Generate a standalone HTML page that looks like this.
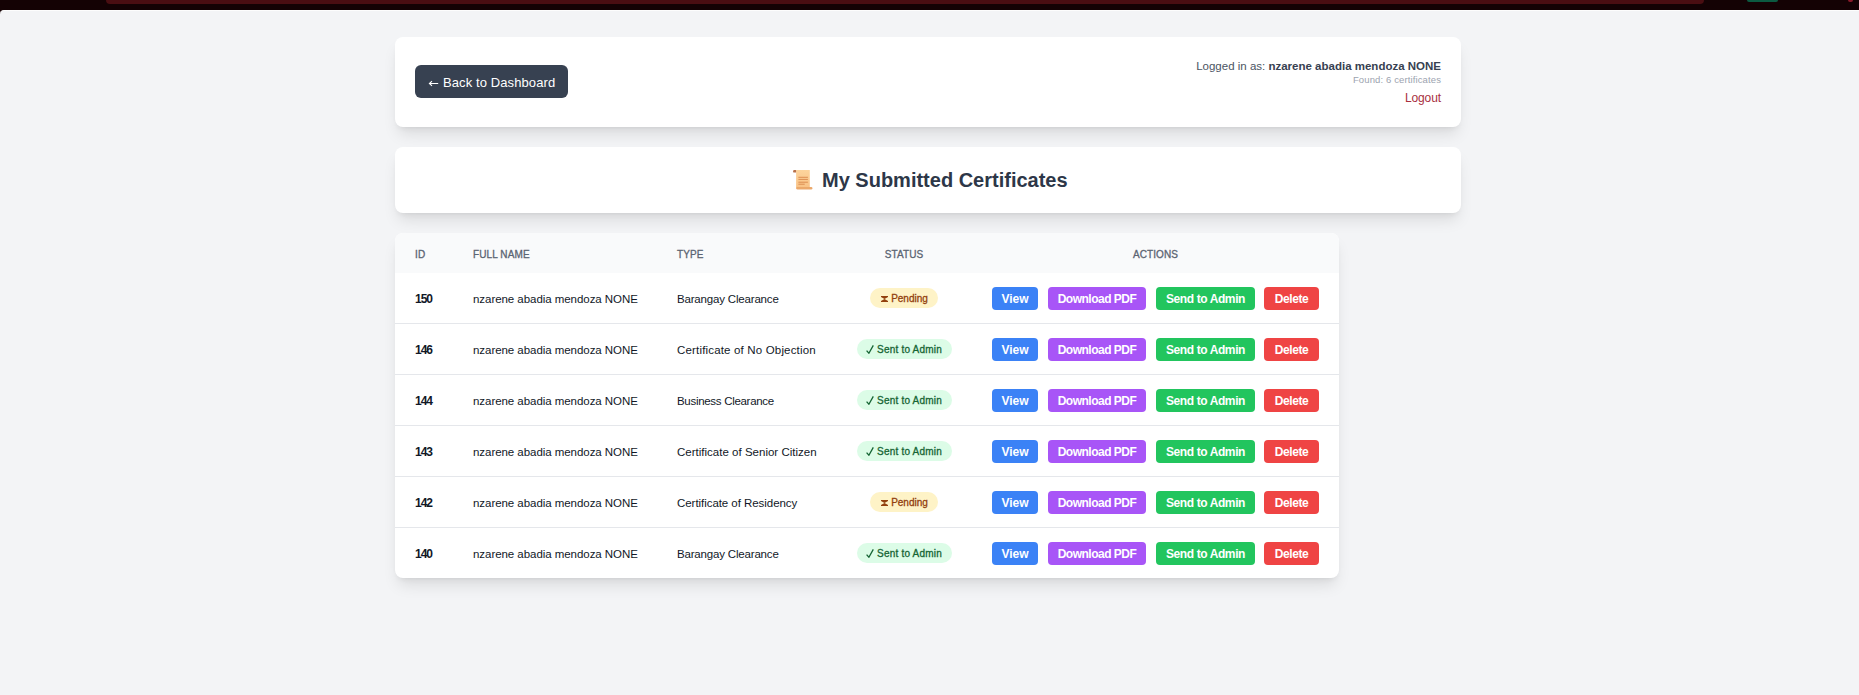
<!DOCTYPE html>
<html>
<head>
<meta charset="utf-8">
<style>
*{box-sizing:border-box;margin:0;padding:0}
html,body{width:1859px;height:695px;overflow:hidden}
body{background:#140204;font-family:"Liberation Sans",sans-serif;position:relative}
.topred{position:absolute;left:106px;top:0;width:1598px;height:4px;background:#4a0e12;border-radius:0 0 6px 6px}
.topgreen{position:absolute;left:1747px;top:0;width:31px;height:2px;background:#0b5a41;border-radius:0 0 3px 3px}
.topdot{position:absolute;left:1848px;top:0;width:5px;height:2px;background:#8a1a2a;border-radius:0 0 3px 3px}
.page{position:absolute;left:0;top:10px;width:1859px;height:685px;background:#f3f4f6;border-radius:4px 0 0 0;border-top:1px solid #fdfdfd}
.card{position:absolute;background:#fff;border-radius:8px;box-shadow:0 10px 15px -3px rgba(0,0,0,0.1),0 4px 6px -4px rgba(0,0,0,0.1)}
.hdr{left:395px;top:37px;width:1066px;height:90px}
.back{position:absolute;left:20px;top:28px;width:153px;height:33px;background:#374151;border-radius:6px;color:#fff;font-size:13px;letter-spacing:0.1px;line-height:33px;white-space:nowrap}
.back svg{position:absolute;left:13px;top:15px}
.back span{position:absolute;left:28px;top:1px}
.info{position:absolute;right:20px;top:21px;text-align:right;color:#4b5563;white-space:nowrap}
.l1{position:absolute;right:0;top:1px;font-size:11.5px;line-height:14px}
.l1 b{color:#374151}
.l2{position:absolute;right:0;top:16px;font-size:9.5px;letter-spacing:0.12px;line-height:12px;color:#9ca3af}
.l3{position:absolute;right:0;top:33px;font-size:12px;letter-spacing:-0.1px;line-height:14px;color:#a8303e}
.title{left:395px;top:147px;width:1066px;height:66px;text-align:center}
.title h1{position:absolute;left:427px;top:21px;font-size:20px;line-height:24px;color:#2d3748;font-weight:bold;white-space:nowrap}
.scroll{position:absolute;left:394px;top:20px}
.tbl{left:395px;top:233px;width:944px;height:345px;overflow:hidden}
table{border-collapse:collapse;width:944px;table-layout:fixed}
th{background:#f9fafb;height:40px;padding:2px 20px 0;font-size:10px;letter-spacing:0.1px;color:#5b6472;text-align:left;font-weight:normal;-webkit-text-stroke:0.3px #5b6472;text-transform:uppercase}
th.hc{text-align:center}
td{height:51px;padding:2px 20px 0;font-size:12px;color:#111827;border-top:1px solid #e5e7eb;white-space:nowrap}
tbody tr:first-child td{border-top:0;height:50px}
td.cid{font-weight:bold;letter-spacing:-1px}
td.cname{letter-spacing:-0.05px;font-size:11.5px}
td.ctype{font-size:11.5px}
td.cst{text-align:center;padding:0}
td.cact{text-align:left;font-size:0}
.badge{display:inline-block;height:20px;line-height:20px;padding-top:1px;border-radius:10px;font-size:10px;font-weight:normal;text-align:center}
.pend{background:#fef3c7;color:#92400e;width:68px;-webkit-text-stroke:0.3px #92400e}
.sent{background:#dcfce7;color:#166534;width:95px;letter-spacing:0.2px;-webkit-text-stroke:0.3px #166534}
.hg{margin-right:4px;vertical-align:0px;position:relative;left:1px}
.ck{margin-right:3px;vertical-align:-1px}
.btn{display:inline-block;height:23px;line-height:23px;padding-top:1px;border-radius:4px;font-size:12px;font-weight:bold;color:#fff;margin-left:10px;text-align:center;vertical-align:middle}
.btn:first-child{margin-left:0}
.bv{background:#3b82f6;width:46px}
.bd{background:#a855f7;width:98px;letter-spacing:-0.5px}
.bs{background:#22c55e;width:99px;letter-spacing:-0.4px}
.bx{background:#ef4444;width:55px;margin-left:9px;letter-spacing:-0.4px}
</style>
</head>
<body>
<div class="topred"></div>
<div class="topgreen"></div>
<div class="topdot"></div>
<div class="page"></div>
<div class="card hdr">
  <div class="back"><svg width="11" height="7" viewBox="0 0 11 7"><path d="M10.2 3.5H1.6M4 1.1L1.4 3.5L4 5.9" stroke="#fff" stroke-width="1.1" fill="none"/></svg><span>Back to Dashboard</span></div>
  <div class="info">
    <div class="l1">Logged in as: <b>nzarene abadia mendoza NONE</b></div>
    <div class="l2">Found: 6 certificates</div>
    <div class="l3">Logout</div>
  </div>
</div>
<div class="card title"><svg class="scroll" width="28" height="26" viewBox="0 0 28 26"><defs><linearGradient id="pg" x1="0" y1="0" x2="0" y2="1"><stop offset="0" stop-color="#fdd49c"/><stop offset="1" stop-color="#f8c184"/></linearGradient></defs><rect x="4.1" y="3" width="3.6" height="2.6" rx="1.2" fill="#b8704a"/><rect x="7.1" y="3" width="13.7" height="18.6" fill="url(#pg)"/><rect x="9.4" y="9.8" width="9.5" height="1" fill="#dc8e52"/><rect x="9.4" y="11.9" width="9.5" height="1" fill="#dc8e52"/><rect x="9.4" y="14.7" width="9.5" height="1" fill="#dc8e52"/><rect x="9.4" y="16.7" width="6.3" height="1" fill="#dc8e52"/><rect x="7.3" y="19.9" width="16.1" height="2.6" rx="1.2" fill="#eba96c"/></svg><h1>My Submitted Certificates</h1></div>
<div class="card tbl">
<table>
<colgroup><col style="width:58px"><col style="width:204px"><col style="width:179px"><col style="width:136px"><col style="width:367px"></colgroup>
<thead><tr><th>ID</th><th>Full Name</th><th>Type</th><th class="hc">Status</th><th class="hc">Actions</th></tr></thead>
<tbody>
<tr><td class="cid">150</td><td class="cname">nzarene abadia mendoza NONE</td><td class="ctype" style="letter-spacing:-0.18px">Barangay Clearance</td><td class="cst"><span class="badge pend"><svg class="hg" width="7" height="6" viewBox="0 0 7 6"><path d="M0 0H7V0.9L3.5 3L7 5.1V6H0V5.1L3.5 3L0 0.9Z" fill="#92400e"/></svg>Pending</span></td><td class="cact"><span class="btn bv">View</span><span class="btn bd">Download PDF</span><span class="btn bs">Send to Admin</span><span class="btn bx">Delete</span></td></tr>
<tr><td class="cid">146</td><td class="cname">nzarene abadia mendoza NONE</td><td class="ctype" style="letter-spacing:0.17px">Certificate of No Objection</td><td class="cst"><span class="badge sent"><svg class="ck" width="8" height="9" viewBox="0 0 8 9"><path d="M0.6 5.6L2.9 8.2L7.3 0.4" stroke="#166534" stroke-width="1.3" fill="none"/></svg>Sent to Admin</span></td><td class="cact"><span class="btn bv">View</span><span class="btn bd">Download PDF</span><span class="btn bs">Send to Admin</span><span class="btn bx">Delete</span></td></tr>
<tr><td class="cid">144</td><td class="cname">nzarene abadia mendoza NONE</td><td class="ctype" style="letter-spacing:-0.3px">Business Clearance</td><td class="cst"><span class="badge sent"><svg class="ck" width="8" height="9" viewBox="0 0 8 9"><path d="M0.6 5.6L2.9 8.2L7.3 0.4" stroke="#166534" stroke-width="1.3" fill="none"/></svg>Sent to Admin</span></td><td class="cact"><span class="btn bv">View</span><span class="btn bd">Download PDF</span><span class="btn bs">Send to Admin</span><span class="btn bx">Delete</span></td></tr>
<tr><td class="cid">143</td><td class="cname">nzarene abadia mendoza NONE</td><td class="ctype" style="letter-spacing:0.01px">Certificate of Senior Citizen</td><td class="cst"><span class="badge sent"><svg class="ck" width="8" height="9" viewBox="0 0 8 9"><path d="M0.6 5.6L2.9 8.2L7.3 0.4" stroke="#166534" stroke-width="1.3" fill="none"/></svg>Sent to Admin</span></td><td class="cact"><span class="btn bv">View</span><span class="btn bd">Download PDF</span><span class="btn bs">Send to Admin</span><span class="btn bx">Delete</span></td></tr>
<tr><td class="cid">142</td><td class="cname">nzarene abadia mendoza NONE</td><td class="ctype" style="letter-spacing:-0.05px">Certificate of Residency</td><td class="cst"><span class="badge pend"><svg class="hg" width="7" height="6" viewBox="0 0 7 6"><path d="M0 0H7V0.9L3.5 3L7 5.1V6H0V5.1L3.5 3L0 0.9Z" fill="#92400e"/></svg>Pending</span></td><td class="cact"><span class="btn bv">View</span><span class="btn bd">Download PDF</span><span class="btn bs">Send to Admin</span><span class="btn bx">Delete</span></td></tr>
<tr><td class="cid">140</td><td class="cname">nzarene abadia mendoza NONE</td><td class="ctype" style="letter-spacing:-0.18px">Barangay Clearance</td><td class="cst"><span class="badge sent"><svg class="ck" width="8" height="9" viewBox="0 0 8 9"><path d="M0.6 5.6L2.9 8.2L7.3 0.4" stroke="#166534" stroke-width="1.3" fill="none"/></svg>Sent to Admin</span></td><td class="cact"><span class="btn bv">View</span><span class="btn bd">Download PDF</span><span class="btn bs">Send to Admin</span><span class="btn bx">Delete</span></td></tr>
</tbody></table>
</div>
</body>
</html>
